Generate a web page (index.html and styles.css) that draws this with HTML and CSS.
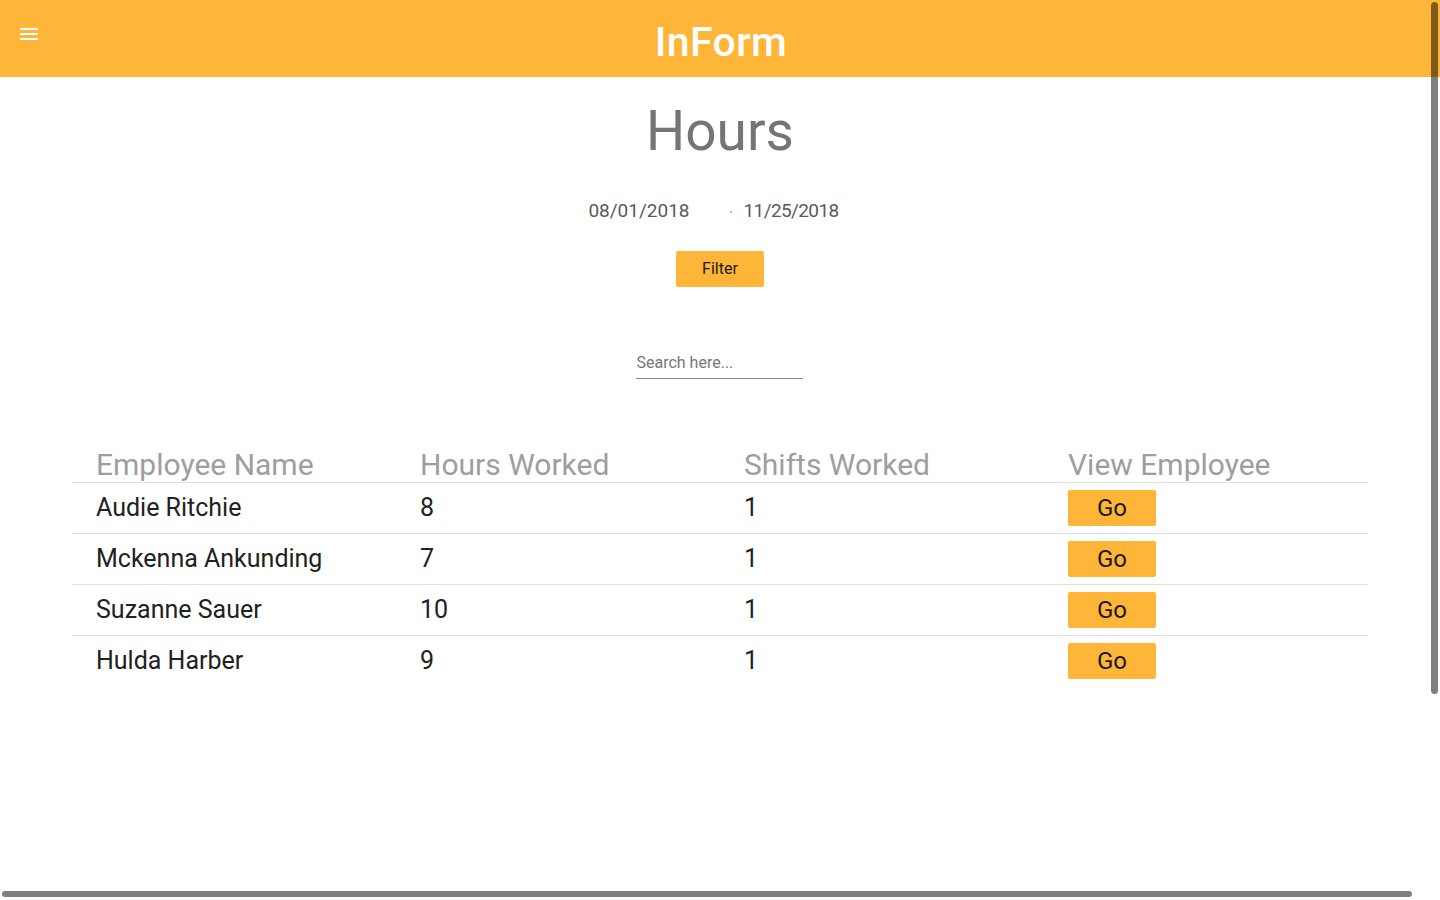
FILE: index.html
```html
<!DOCTYPE html>
<html lang="en">
<head>
<meta charset="utf-8">
<title>InForm - Hours</title>
<link rel="stylesheet" href="styles.css">
</head>
<body>
<header class="topbar">
  <button class="menu-btn" aria-label="Menu">
    <svg width="24" height="24" viewBox="0 0 24 24"><path fill="#fff" d="M3 18h18v-2H3v2zm0-5h18v-2H3v2zm0-7v2h18V6H3z"/></svg>
  </button>
  <div class="brand">InForm</div>
  <div class="spacer"></div>
</header>

<main class="content">
  <h1 class="page-title">Hours</h1>

  <div class="date-range">
    <span class="date">08/01/2018</span>
    <span class="sep"></span>
    <span class="date date-end">11/25/2018</span>
  </div>

  <div class="filter-row">
    <button class="btn btn-filter">Filter</button>
  </div>

  <div class="search-row">
    <input class="search" type="text" placeholder="Search here...">
  </div>

  <table class="hours-table">
    <thead>
      <tr>
        <th>Employee Name</th>
        <th>Hours Worked</th>
        <th>Shifts Worked</th>
        <th>View Employee</th>
      </tr>
    </thead>
    <tbody>
      <tr><td>Audie Ritchie</td><td>8</td><td>1</td><td><button class="btn btn-go">Go</button></td></tr>
      <tr><td>Mckenna Ankunding</td><td>7</td><td>1</td><td><button class="btn btn-go">Go</button></td></tr>
      <tr><td>Suzanne Sauer</td><td>10</td><td>1</td><td><button class="btn btn-go">Go</button></td></tr>
      <tr><td>Hulda Harber</td><td>9</td><td>1</td><td><button class="btn btn-go">Go</button></td></tr>
    </tbody>
  </table>
</main>

<div class="scroll-v"></div>
<div class="scroll-h"></div>
</body>
</html>
```

FILE: styles.css
```css
* { box-sizing: border-box; }

html, body {
  margin: 0;
  padding: 0;
  background: #fff;
  font-family: Roboto, "Liberation Sans", Arial, sans-serif;
  overflow: hidden;
}

.topbar {
  height: 77px;
  background: #ffb537;
  display: grid;
  grid-template-columns: 1fr auto 1fr;
}

.menu-btn {
  align-self: start;
  justify-self: start;
  margin: 22px 0 0 17px;
  padding: 0;
  width: 24px;
  height: 24px;
  border: none;
  background: transparent;
  display: block;
}
.menu-btn svg { display: block; }

.brand {
  color: #fff;
  font-size: 41px;
  font-weight: 500;
  line-height: 77px;
  padding-top: 4px;
  letter-spacing: 0.4px;
  padding-left: 2px;
  height: 77px;
}

.content {
  text-align: center;
}

.page-title {
  margin: 21px 0 0;
  font-size: 55px;
  font-weight: 400;
  line-height: 66px;
  color: #757575;
}

.date-range {
  margin-top: 35px;
  display: flex;
  justify-content: center;
  align-items: center;
  padding-right: 13px;
  height: 24px;
}
.date {
  font-size: 19px;
  line-height: 24px;
  color: #5a5a5a;
  font-weight: 400;
}
.date-end {
  letter-spacing: -0.6px;
}
.sep {
  width: 2px;
  height: 2px;
  background: #aaa;
  border-radius: 1px;
  margin: 2px 12px 0 40px;
}

.filter-row {
  margin-top: 28px;
  display: flex;
  justify-content: center;
}

.btn {
  border: none;
  background: #ffb537;
  color: #1a1a1a;
  border-radius: 2px;
  font-family: Roboto, "Liberation Sans", Arial, sans-serif;
  padding: 0;
  cursor: pointer;
}

.btn-filter {
  width: 88px;
  height: 36px;
  font-size: 16px;
  line-height: 36px;
}

.search-row {
  margin-top: 66px;
  display: flex;
  justify-content: center;
  padding-right: 2px;
}
.search {
  width: 167px;
  height: 26px;
  padding: 0 0 6px 1px;
  border: none;
  border-bottom: 1px solid #8a8a8a;
  outline: none;
  font-family: Roboto, "Liberation Sans", Arial, sans-serif;
  font-size: 16px;
  color: #333;
  background: transparent;
}
.search::placeholder { color: #777; opacity: 1; }

.hours-table {
  margin: 68px 72px 0;
  width: 1296px;
  border-collapse: collapse;
  table-layout: fixed;
  text-align: left;
}

.hours-table th {
  font-size: 30px;
  font-weight: 400;
  line-height: 35px;
  color: #9e9e9e;
  padding: 0 24px;
  border-bottom: 1px solid #e0e0e0;
  white-space: nowrap;
}

.hours-table td {
  font-size: 25px;
  line-height: 36px;
  color: #212121;
  padding: 7px 24px;
  border-bottom: 1px solid #e0e0e0;
  white-space: nowrap;
}
.hours-table tbody tr:last-child td { border-bottom: none; }

.btn-go {
  display: block;
  width: 88px;
  height: 36px;
  font-size: 24px;
  line-height: 36px;
}

.scroll-v {
  position: fixed;
  left: 1431px;
  top: 2px;
  width: 7px;
  height: 692px;
  border-radius: 4px;
  background: rgba(0, 0, 0, 0.5);
}
.scroll-h {
  position: fixed;
  left: 2px;
  top: 891px;
  width: 1410px;
  height: 6px;
  border-radius: 3px;
  background: rgba(0, 0, 0, 0.5);
}
```
